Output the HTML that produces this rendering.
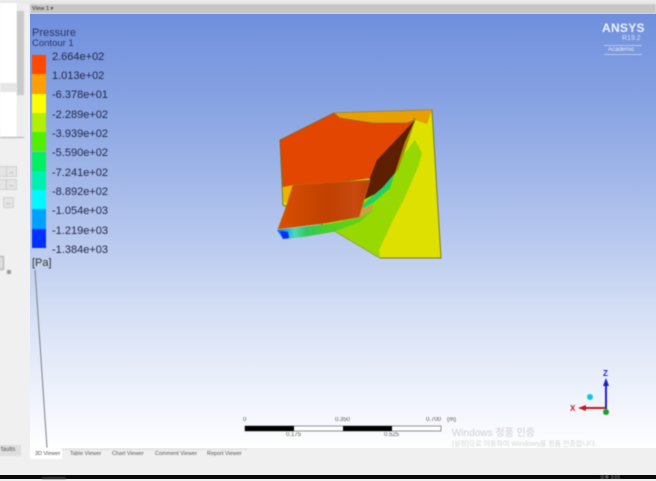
<!DOCTYPE html>
<html><head><meta charset="utf-8">
<style>
html,body{margin:0;padding:0;background:#f0f0f0}
body{width:656px;height:479px;overflow:hidden;position:relative;font-family:"Liberation Sans","Noto Sans CJK KR",sans-serif}
.b{position:absolute;filter:blur(.7px)}
.t{position:absolute;white-space:nowrap;filter:blur(.55px)}
.lab{position:absolute;left:52px;font-size:11px;line-height:12px;color:#23284a;white-space:nowrap;filter:blur(.5px)}
.sw{position:absolute;left:32px;width:14px;height:19.3px}
.btn{position:absolute;width:11px;height:11px;background:#e4e4e4;border:1px solid #d2d2d2;font-size:7px;line-height:9px;text-align:center;color:#666;box-sizing:border-box;filter:blur(.5px)}
.tab{position:absolute;top:451px;font-size:5.5px;line-height:7px;color:#555;white-space:nowrap;filter:blur(.5px)}
.sc{position:absolute;font-size:6px;line-height:7px;color:#555;white-space:nowrap;filter:blur(.5px)}
</style></head>
<body>
<div class="b" style="left:0;top:0;width:656px;height:4px;background:#e9e9e9"></div>
<div class="b" style="left:0;top:3px;width:17px;height:134px;background:#fff"></div>
<div class="b" style="left:0;top:83px;width:17px;height:9px;background:#e6e6e6"></div>
<div class="b" style="left:17px;top:3px;width:7px;height:134px;background:#ededed"></div>
<div class="b" style="left:17px;top:11px;width:7px;height:84px;background:#c9c9c9"></div>
<div class="b" style="left:0;top:137px;width:24px;height:1px;background:#aaa"></div>
<div class="btn" style="left:-4px;top:166px"></div>
<div class="btn" style="left:6px;top:166px">..</div>
<div class="btn" style="left:-4px;top:179px"></div>
<div class="btn" style="left:6px;top:179px">..</div>
<div class="btn" style="left:3px;top:197px">..</div>
<div class="b" style="left:-2px;top:256px;width:4px;height:12px;background:#ddd;border:1px solid #aaa"></div>
<div class="b" style="left:7px;top:270px;width:4px;height:4px;background:#999"></div>

<div class="b" style="left:30px;top:4px;width:626px;height:10px;background:#c6c6c6"></div>
<div class="t" style="left:32px;top:5px;font-size:5.5px;line-height:8px;font-weight:bold;color:#555">View 1 ▾</div>

<div style="position:absolute;left:30px;top:14px;width:626px;height:434px;background:linear-gradient(180deg,#6f8fdd 0%,#8ea8e4 25%,#b5c6ed 50%,#dae3f6 72%,#fafbfe 97%,#fff 100%)"></div>

<div class="t" style="left:602px;top:21px;font-size:12px;line-height:14px;font-weight:bold;color:#eef2fc;letter-spacing:.3px">ANSYS</div>
<div class="t" style="left:622px;top:35px;font-size:7px;line-height:8px;color:#d8e0f6">R19.2</div>
<div style="position:absolute;left:604px;top:45px;width:38px;height:10px;border-top:1px solid #b8c8f0;border-bottom:1px solid #b8c8f0;box-sizing:border-box;filter:blur(.5px)"></div>
<div class="t" style="left:608px;top:46px;font-size:6px;line-height:8px;color:#e8eefb">Academic</div>

<div class="t" style="left:32px;top:27px;font-size:11px;line-height:13px;color:#2a3568">Pressure</div>
<div class="t" style="left:32px;top:38px;font-size:9.5px;line-height:12px;color:#2a3568">Contour 1</div>

<div class="b" style="left:32px;top:55px;width:14px;height:193px;filter:blur(.5px)">
<div class="sw" style="left:0;top:0;background:#ff4800"></div>
<div class="sw" style="left:0;top:19.3px;background:#ffa000"></div>
<div class="sw" style="left:0;top:38.6px;background:#ffff00"></div>
<div class="sw" style="left:0;top:57.9px;background:#b0f000"></div>
<div class="sw" style="left:0;top:77.2px;background:#50f000"></div>
<div class="sw" style="left:0;top:96.5px;background:#00f060"></div>
<div class="sw" style="left:0;top:115.8px;background:#00f0b0"></div>
<div class="sw" style="left:0;top:135.1px;background:#00f8ff"></div>
<div class="sw" style="left:0;top:154.4px;background:#00a0ff"></div>
<div class="sw" style="left:0;top:173.7px;background:#0030ff"></div>
</div>
<div class="lab" style="top:51px">2.664e+02</div>
<div class="lab" style="top:70px">1.013e+02</div>
<div class="lab" style="top:89px">-6.378e+01</div>
<div class="lab" style="top:109px">-2.289e+02</div>
<div class="lab" style="top:128px">-3.939e+02</div>
<div class="lab" style="top:147px">-5.590e+02</div>
<div class="lab" style="top:167px">-7.241e+02</div>
<div class="lab" style="top:186px">-8.892e+02</div>
<div class="lab" style="top:205px">-1.054e+03</div>
<div class="lab" style="top:225px">-1.219e+03</div>
<div class="lab" style="top:244px">-1.384e+03</div>
<div class="t" style="left:32px;top:257px;font-size:11px;line-height:13px;color:#333">[Pa]</div>

<svg style="position:absolute;left:0;top:0;filter:blur(.6px)" width="656" height="479" viewBox="0 0 656 479">
<defs>
<linearGradient id="w" x1="0" y1="0" x2="1" y2="0">
<stop offset="0" stop-color="#d85000"/><stop offset=".55" stop-color="#c04000"/><stop offset=".85" stop-color="#c84a10"/><stop offset="1" stop-color="#b84000"/>
</linearGradient>
<linearGradient id="h" x1="0" y1="0" x2="1" y2="0">
<stop offset="0" stop-color="#1060f0"/><stop offset=".08" stop-color="#10a0f0"/><stop offset=".18" stop-color="#50d8b0"/><stop offset=".3" stop-color="#30c860"/><stop offset=".55" stop-color="#50d020"/><stop offset="1" stop-color="#70d010"/>
</linearGradient>
</defs>
<path d="M35 270 L47 448" stroke="#7c8088" stroke-width="1" fill="none"/>
<path d="M334 113 L432 110 L441 258 L380 258 L333 230 L283 205 L280 140Z" fill="#dde000" stroke="#7d7a20" stroke-width="1"/>
<path d="M333 230 L360 205 L395 165 L415 140 L422 153 L418 167 L405 197 L393 220 L379 250 L380 258Z" fill="#96d800"/>
<path d="M334 113 L432 110 L427 124 L415 120 L407 123 L373 123 L340 118Z" fill="#e8a000"/>
<path d="M280 140 L334 113 L340 118 L373 123 L407 123 L415 120 L377 160 L370 178 L340 182 L293 185 L283 187Z" fill="#e24600" stroke="#8a6020" stroke-width=".5"/>
<path d="M283 187 L293 185 L287 202 L284 202Z" fill="#f0b000"/>
<path d="M415 120 L405 142 L395 173 L383 190 L363 200 L370 178 L377 160Z" fill="#5e1e00"/>
<path d="M415 120 L412 118 L416 118 L408 142 L398 170 L395 173 L405 142Z" fill="#a09000"/>
<path d="M360 207 L383 187 L395 173 L390 188 L373 203 L363 208Z" fill="#20d060"/>
<path d="M355 218 L362 208 L373 205 L370 213 L358 221Z" fill="#d0a040"/>
<path d="M293 185 L370 180 L359 217 L327 223 L278 229 L285 210Z" fill="url(#w)" stroke="#c87000" stroke-width=".6"/>
<path d="M277 230 L327 224 L359 218 L375 209 L360 222 L333 232 L303 237 L283 239Z" fill="url(#h)"/>
<path d="M280 231 L288 232 L289 238 L283 239Z" fill="#0030ff"/>
<path d="M606 409 L606 380" stroke="#1a22c0" stroke-width="2"/>
<path d="M606 378 L603 386 L609 386Z" fill="#1a22c0"/>
<path d="M606 408 L583 408" stroke="#c01818" stroke-width="2"/>
<path d="M578 408 L586 405 L586 411Z" fill="#c01818"/>
<circle cx="606" cy="412" r="3" fill="#18a030"/>
<circle cx="590" cy="397" r="3" fill="#10c8d8"/>
<rect x="245" y="426" width="196" height="5" fill="#fff" stroke="#777" stroke-width=".8"/>
<rect x="245" y="426" width="49" height="5" fill="#000"/>
<rect x="343" y="426" width="49" height="5" fill="#000"/>
</svg>

<div class="t" style="left:603px;top:369px;font-size:8px;line-height:9px;font-weight:bold;color:#2028b8">Z</div>
<div class="t" style="left:570px;top:404px;font-size:8px;line-height:9px;font-weight:bold;color:#c02020">X</div>

<div class="sc" style="left:243px;top:417px">0</div>
<div class="sc" style="left:335px;top:417px">0.350</div>
<div class="sc" style="left:426px;top:417px">0.700</div>
<div class="sc" style="left:447px;top:417px">(m)</div>
<div class="sc" style="left:286px;top:432px">0.175</div>
<div class="sc" style="left:384px;top:432px">0.525</div>

<div class="t" style="left:452px;top:427px;font-size:10px;line-height:13px;color:#cfcfcf">Windows 정품 인증</div>
<div class="t" style="left:452px;top:440px;font-size:7px;line-height:9px;color:#d4d4d4">[설정]으로 이동하여 Windows를 정품 인증합니다.</div>

<div style="position:absolute;left:0;top:448px;width:656px;height:27px;background:#f0f0f0"></div>
<div class="b" style="left:30px;top:448px;width:32px;height:11px;background:#fff"></div>
<div class="b" style="left:62px;top:449px;width:186px;height:1px;background:#dcdcdc"></div>
<div class="t" style="left:-4px;top:445px;font-size:6px;line-height:8px;color:#555;background:#dedede;padding:1px 6px 2px 5px">faults</div>
<div class="tab" style="left:35px;top:451px">3D Viewer</div>
<div class="tab" style="left:70px">Table Viewer</div>
<div class="tab" style="left:112px">Chart Viewer</div>
<div class="tab" style="left:155px">Comment Viewer</div>
<div class="tab" style="left:207px">Report Viewer</div>

<div style="position:absolute;left:0;top:475px;width:656px;height:4px;background:#0a0a0a"></div>
<div class="b" style="left:42px;top:477px;width:24px;height:2px;background:#3a3a3a"></div>
<div class="t" style="left:600px;top:476px;font-size:5px;line-height:4px;color:#aaa">오후 3:01</div>
</body></html>
